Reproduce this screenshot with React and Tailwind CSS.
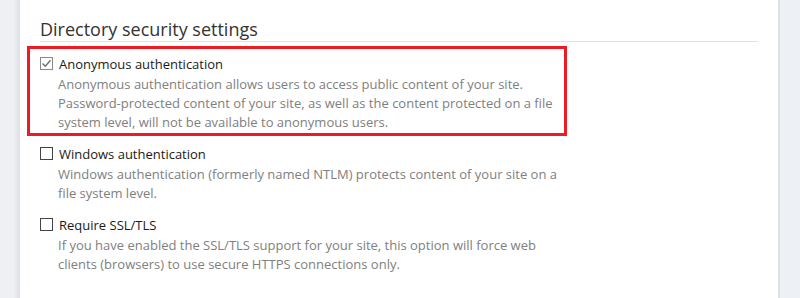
import React from "react";

function Box({ checked }) {
  return (
    <span
      className={
        "mt-[1px] flex h-[13px] w-[13px] shrink-0 items-center justify-center border bg-white " +
        (checked ? "border-[#8a8a8a]" : "border-[#444]")
      }
    >
      {checked && (
        <svg width="11" height="11" viewBox="0 0 11 11">
          <path d="M1.5 5.5 L4.3 8.3 L9.5 2.2" fill="none" stroke="#707070" strokeWidth="1.4" />
        </svg>
      )}
    </span>
  );
}

function Item({ checked, label, children, highlight }) {
  return (
    <div className="relative">
      {highlight && (
        <div className="pointer-events-none absolute left-[-13px] top-[-10px] h-[90px] w-[540px] border-[3px] border-[#ed1c24]" />
      )}
      <div className="flex items-start gap-[6px]">
        <Box checked={checked} />
        <span className="text-[13px] leading-[16px] text-[#1a1a1a]">{label}</span>
      </div>
      <p className="mt-[3px] w-[525px] pl-[18px] text-[13px] leading-[19px] text-[#808080]">{children}</p>
    </div>
  );
}

export default function App() {
  return (
    <div
      className="flex h-[298px] w-[800px] bg-[#edf0f4]"
      style={{ fontFamily: '"Open Sans", "Noto Sans", sans-serif' }}
    >
      <div className="w-[20px] bg-gradient-to-r from-[#eef0f3] from-70% to-[#dcdfe4]" />
      <div className="w-[760px] border-r-2 border-[#dde0e5] bg-white px-[20px]">
        <h2 className="pt-[17px] text-[18px] leading-[24px] text-[#333]">Directory security settings</h2>
        <div className="h-px bg-[#e3e3e3]" />
        <div className="flex flex-col gap-[14px] pt-[14px]">
          <Item checked highlight label="Anonymous authentication">
            Anonymous authentication allows users to access public content of your site. Password-protected content of
            your site, as well as the content protected on a file system level, will not be available to anonymous users.
          </Item>
          <Item label="Windows authentication">
            Windows authentication (formerly named NTLM) protects content of your site on a file system level.
          </Item>
          <Item label="Require SSL/TLS">
            If you have enabled the SSL/TLS support for your site, this option will force web clients (browsers) to use
            secure HTTPS connections only.
          </Item>
        </div>
      </div>
    </div>
  );
}
